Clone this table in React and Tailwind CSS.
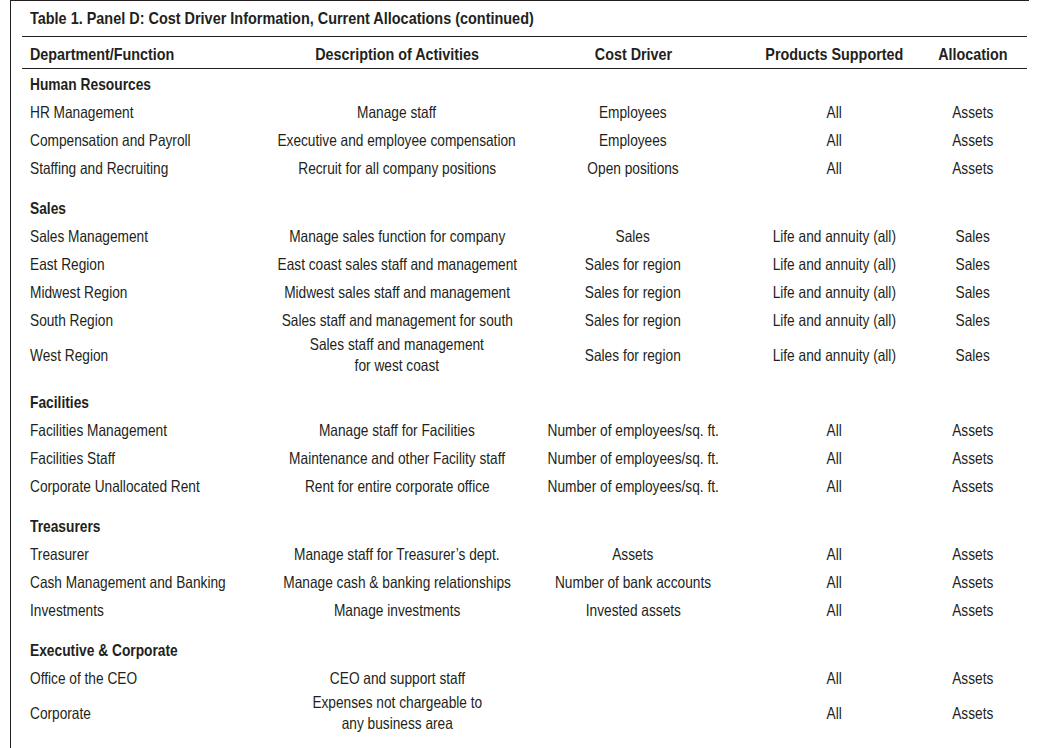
const sections = [
  {
    title: 'Human Resources',
    rows: [
      ['HR Management', ['Manage staff'], 'Employees', 'All', 'Assets'],
      ['Compensation and Payroll', ['Executive and employee compensation'], 'Employees', 'All', 'Assets'],
      ['Staffing and Recruiting', ['Recruit for all company positions'], 'Open positions', 'All', 'Assets'],
    ],
  },
  {
    title: 'Sales',
    rows: [
      ['Sales Management', ['Manage sales function for company'], 'Sales', 'Life and annuity (all)', 'Sales'],
      ['East Region', ['East coast sales staff and management'], 'Sales for region', 'Life and annuity (all)', 'Sales'],
      ['Midwest Region', ['Midwest sales staff and management'], 'Sales for region', 'Life and annuity (all)', 'Sales'],
      ['South Region', ['Sales staff and management for south'], 'Sales for region', 'Life and annuity (all)', 'Sales'],
      ['West Region', ['Sales staff and management', 'for west coast'], 'Sales for region', 'Life and annuity (all)', 'Sales'],
    ],
  },
  {
    title: 'Facilities',
    rows: [
      ['Facilities Management', ['Manage staff for Facilities'], 'Number of employees/sq. ft.', 'All', 'Assets'],
      ['Facilities Staff', ['Maintenance and other Facility staff'], 'Number of employees/sq. ft.', 'All', 'Assets'],
      ['Corporate Unallocated Rent', ['Rent for entire corporate office'], 'Number of employees/sq. ft.', 'All', 'Assets'],
    ],
  },
  {
    title: 'Treasurers',
    rows: [
      ['Treasurer', ['Manage staff for Treasurer\u2019s dept.'], 'Assets', 'All', 'Assets'],
      ['Cash Management and Banking', ['Manage cash & banking relationships'], 'Number of bank accounts', 'All', 'Assets'],
      ['Investments', ['Manage investments'], 'Invested assets', 'All', 'Assets'],
    ],
  },
  {
    title: 'Executive & Corporate',
    rows: [
      ['Office of the CEO', ['CEO and support staff'], '', 'All', 'Assets'],
      ['Corporate', ['Expenses not chargeable to', 'any business area'], '', 'All', 'Assets'],
    ],
  },
];

const cols = 'grid grid-cols-[248px_254px_218px_184px_94px]';

// the print face is a condensed grotesque; Arial metrics squeezed horizontally stand in for it
const squeeze = {
  body: 'scale-x-[0.83]',
  head: 'scale-x-[0.87]',
  section: 'scale-x-[0.835]',
  title: 'scale-x-[0.875]',
};

function Left({ children, kind = 'body' }) {
  return (
    <div className="flex pl-2">
      <span className={`origin-left whitespace-nowrap ${squeeze[kind]}`}>{children}</span>
    </div>
  );
}

function Center({ children, kind = 'body' }) {
  return (
    <div className="flex justify-center">
      <span className={`flex flex-col items-center whitespace-nowrap ${squeeze[kind]}`}>{children}</span>
    </div>
  );
}

function Row({ row }) {
  const [dept, desc, driver, products, alloc] = row;
  const tall = desc.length > 1;
  return (
    <div className={`${cols} items-center ${tall ? 'h-[42px] leading-[21px]' : 'h-[28px]'}`}>
      <Left>{dept}</Left>
      <Center>
        {desc.map((d) => (
          <span key={d}>{d}</span>
        ))}
      </Center>
      <Center>{driver}</Center>
      <Center>{products}</Center>
      <Center>{alloc}</Center>
    </div>
  );
}

export default function App() {
  return (
    <div className="bg-white min-h-[748px] text-[#231f20] font-['Liberation_Sans',Arial,sans-serif] text-[16.5px]">
      <div className="ml-[10px] w-[1019px] min-h-[748px] border-l border-t border-[#231f20] pl-[11px] overflow-hidden">
        <div className="w-[1005px]">
          {/* title */}
          <div className="h-[36px] flex items-center font-bold border-b border-[#231f20]">
            <Left kind="title">Table 1. Panel D: Cost Driver Information, Current Allocations (continued)</Left>
          </div>
          {/* column headers */}
          <div className={`${cols} h-[32px] pt-[3px] items-center font-bold border-b border-[#231f20]`}>
            <Left kind="head">Department/Function</Left>
            <Center kind="head">Description of Activities</Center>
            <Center kind="head">Cost Driver</Center>
            <Center kind="head">Products Supported</Center>
            <Center kind="head">Allocation</Center>
          </div>
          {sections.map((s, i) => (
            <div key={s.title} className={i > 0 ? 'mt-3' : 'mt-px'}>
              <div className="h-[28px] flex items-center font-bold">
                <Left kind="section">{s.title}</Left>
              </div>
              {s.rows.map((r) => (
                <Row key={r[0]} row={r} />
              ))}
            </div>
          ))}
        </div>
      </div>
    </div>
  );
}
